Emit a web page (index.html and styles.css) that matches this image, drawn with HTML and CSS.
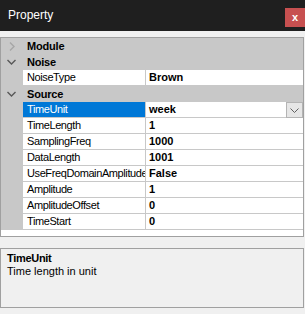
FILE: index.html
```html
<!DOCTYPE html>
<html lang="en">
<head>
    <meta charset="UTF-8">
    <title>Property</title>
    <link rel="stylesheet" href="styles.css">
</head>
<body>

<div class="window">
    <!-- Barra de titulo -->
    <div class="titlebar">
        <span class="title">Property</span>
        <button class="close">x</button>
    </div>

    <!-- Rejilla de propiedades -->
    <div class="grid">
        <div class="cat">
            <span class="chev"><svg width="6" height="9" viewBox="0 0 6 9"><path d="M1 0.5 L5 4.5 L1 8.5" fill="none" stroke="#a6a6a6" stroke-width="1.4"/></svg></span>
            <span class="cat-label">Module</span>
        </div>

        <div class="cat">
            <span class="chev"><svg width="9" height="6" viewBox="0 0 9 6"><path d="M0.5 1 L4.5 5 L8.5 1" fill="none" stroke="#585858" stroke-width="1.4"/></svg></span>
            <span class="cat-label">Noise</span>
        </div>
        <div class="row"><div class="gutter"></div><div class="name">NoiseType</div><div class="value">Brown</div></div>

        <div class="cat">
            <span class="chev"><svg width="9" height="6" viewBox="0 0 9 6"><path d="M0.5 1 L4.5 5 L8.5 1" fill="none" stroke="#585858" stroke-width="1.4"/></svg></span>
            <span class="cat-label">Source</span>
        </div>
        <div class="row selected">
            <div class="gutter"></div>
            <div class="name">TimeUnit</div>
            <div class="value">week
                <span class="drop">
                    <svg width="9" height="5" viewBox="0 0 9 5"><path d="M0.5 0.5 L4.5 4.5 L8.5 0.5" fill="none" stroke="#606060" stroke-width="1"/></svg>
                </span>
            </div>
        </div>
        <div class="row"><div class="gutter"></div><div class="name">TimeLength</div><div class="value">1</div></div>
        <div class="row"><div class="gutter"></div><div class="name">SamplingFreq</div><div class="value">1000</div></div>
        <div class="row"><div class="gutter"></div><div class="name">DataLength</div><div class="value">1001</div></div>
        <div class="row"><div class="gutter"></div><div class="name">UseFreqDomainAmplitude</div><div class="value">False</div></div>
        <div class="row"><div class="gutter"></div><div class="name">Amplitude</div><div class="value">1</div></div>
        <div class="row"><div class="gutter"></div><div class="name">AmplitudeOffset</div><div class="value">0</div></div>
        <div class="row"><div class="gutter"></div><div class="name">TimeStart</div><div class="value">0</div></div>
    </div>

    <!-- Descripcion -->
    <div class="desc">
        <div class="desc-title">TimeUnit</div>
        <div class="desc-text">Time length in unit</div>
    </div>
</div>

</body>
</html>
```

FILE: styles.css
```css
body {
    margin: 0;
    background-color: #f0f0f0;
    font-family: "Liberation Sans", Arial, sans-serif;
    font-size: 11px;
    color: #000;
}
.window {
    width: 305px;
    height: 314px;
}
.titlebar {
    height: 31px;
    background-color: #1f1f1f;
    display: flex;
    align-items: flex-start;
    justify-content: space-between;
}
.title {
    color: #fff;
    font-size: 12px;
    margin: 8px 0 0 8px;
}
.close {
    margin-top: 8px;
    width: 20px;
    height: 19px;
    border: none;
    padding: 0 0 2px 0;
    background-color: #c75050;
    color: #fff;
    font-family: "Liberation Sans", Arial, sans-serif;
    font-weight: bold;
    font-size: 11px;
}
.grid {
    margin-top: 6px;
    width: 302px;
    height: 198px;
    border: 1px solid #a0a0a0;
    background-color: #fff;
}
.cat {
    height: 16px;
    background-color: #c8c8c8;
    display: flex;
    align-items: center;
}
.chev {
    width: 21px;
    height: 16px;
    display: flex;
    align-items: center;
    justify-content: center;
}
.cat-label {
    font-weight: bold;
    margin-left: 5px;
    letter-spacing: -0.2px;
}
.row {
    height: 16px;
    display: flex;
}
.gutter {
    width: 22px;
    background-color: #c8c8c8;
}
.name {
    width: 118px;
    padding-left: 4px;
    border-right: 1px solid #c8c8c8;
    border-bottom: 1px solid #c8c8c8;
    line-height: 15px;
    white-space: nowrap;
    overflow: hidden;
    letter-spacing: -0.4px;
}
.value {
    flex: 1;
    position: relative;
    padding-left: 3px;
    border-bottom: 1px solid #c8c8c8;
    line-height: 15px;
    font-weight: bold;
}
.row.selected .name {
    background-color: #0078d7;
    color: #fff;
}
.drop {
    position: absolute;
    right: 0;
    top: 0;
    width: 15px;
    height: 14px;
    border: 1px solid #b4b4b4;
    background-color: #e6e6e6;
    display: flex;
    align-items: center;
    justify-content: center;
}
.desc {
    margin-top: 11px;
    width: 302px;
    height: 58px;
    border: 1px solid #a0a0a0;
    background-color: #f0f0f0;
}
.desc-title {
    font-weight: bold;
    margin: 3px 0 0 6px;
    letter-spacing: -0.3px;
}
.desc-text {
    margin: 1px 0 0 6px;
}
```
